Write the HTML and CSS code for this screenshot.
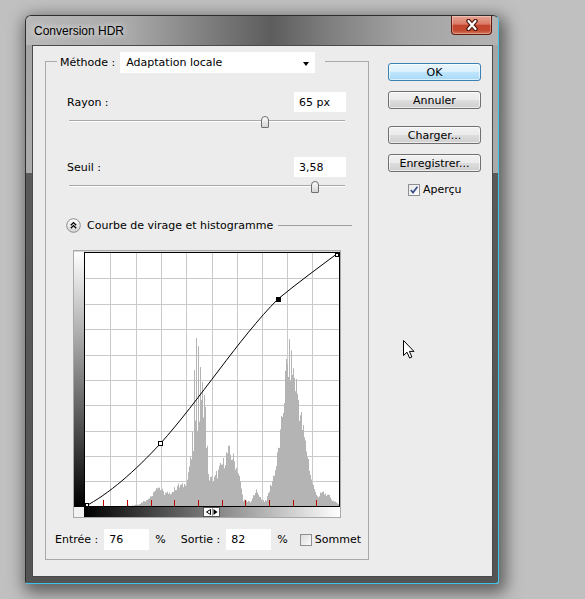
FILE: index.html
```html
<!DOCTYPE html>
<html lang="fr">

<head>
    <meta charset="UTF-8">
    <title>Conversion HDR</title>
    <link rel="stylesheet" href="styles.css">
</head>

<body>
    <div class="desktop">
        <div class="window">
            <div class="titlebar">
                <span class="title">Conversion HDR</span>
                <button class="btn-close">
                    <svg width="14" height="12" viewBox="0 0 14 12">
                        <path d="M3.5,2 L10.5,10 M10.5,2 L3.5,10" stroke="#4a140b" stroke-width="4.4" stroke-linecap="round"/>
                        <path d="M3.5,2 L10.5,10 M10.5,2 L3.5,10" stroke="#fff" stroke-width="2.2" stroke-linecap="round"/>
                    </svg>
                </button>
            </div>

            <div class="client">
                <div class="group">
                    <div class="group-head">
                        <label>Méthode :</label>
                        <div class="select">Adaptation locale</div>
                    </div>

                    <div class="field-row first">
                        <label for="rayon">Rayon :</label>
                        <input type="text" class="field" id="rayon" value="65 px">
                    </div>
                    <div class="slider"><span class="thumb" style="left: 71%"></span></div>

                    <div class="field-row second">
                        <label for="seuil">Seuil :</label>
                        <input type="text" class="field" id="seuil" value="3,58">
                    </div>
                    <div class="slider"><span class="thumb" style="left: 89%"></span></div>

                    <div class="section-head">
                        <svg class="toggle" width="15" height="15" viewBox="0 0 15 15">
                            <defs>
                                <linearGradient id="toggle-bg" x1="0" y1="0" x2="0" y2="1">
                                    <stop offset="0" stop-color="#ffffff"/>
                                    <stop offset="1" stop-color="#d4d4d4"/>
                                </linearGradient>
                            </defs>
                            <circle cx="7.5" cy="7.5" r="6.8" fill="url(#toggle-bg)" stroke="#8c8c8c"/>
                            <path d="M4.8,7.2 L7.5,4.6 L10.2,7.2 M4.8,10.2 L7.5,7.6 L10.2,10.2" fill="none" stroke="#000" stroke-width="1.3"/>
                        </svg>
                        <span class="section-title">Courbe de virage et histogramme</span>
                        <span class="section-line"></span>
                    </div>

                    <svg class="graph" width="268" height="268" viewBox="0 0 268 268">
                        <defs>
                            <linearGradient id="ramp-v" x1="0" y1="0" x2="0" y2="1">
                                <stop offset="0" stop-color="#ffffff"/>
                                <stop offset="1" stop-color="#000000"/>
                            </linearGradient>
                            <linearGradient id="ramp-h" x1="0" y1="0" x2="1" y2="0">
                                <stop offset="0" stop-color="#000000"/>
                                <stop offset="1" stop-color="#ffffff"/>
                            </linearGradient>
                        </defs>
                        <rect x="0.5" y="0.5" width="267" height="267" fill="#d6d6d6" stroke="#a9a9a9"/>
                        <rect x="1" y="2" width="10" height="255" fill="url(#ramp-v)"/>
                        <rect x="11" y="257" width="256" height="10" fill="url(#ramp-h)"/>
                        <rect x="1" y="257" width="10" height="10" fill="#f2f2f2"/>
                        <rect x="11" y="2" width="255" height="255" fill="#fff"/>

                        <!-- grille 10 x 10 -->
                        <path d="M37.5,3V257M63.5,3V257M88.5,3V257M113.5,3V257M139.5,3V257M164.5,3V257M189.5,3V257M214.5,3V257M239.5,3V257
                                 M12,28.5H266M12,54.5H266M12,79.5H266M12,105.5H266M12,130.5H266M12,155.5H266M12,181.5H266M12,206.5H266M12,231.5H266"
                              stroke="#c9c9c9" stroke-width="1"/>

                        <path id="histo" fill="#b4b4b4"/>

                        <path d="M30.5,250V257M54.5,250V257M78.5,250V257M101.5,250V257M125.5,250V257M149.5,250V257M172.5,250V257M196.5,250V257M220.5,250V257M243.5,250V257"
                              stroke="#c00000" stroke-width="1"/>

                        <rect x="11.5" y="2.5" width="255" height="254" fill="none" stroke="#000"/>

                        <path d="M11,257 C36,244 62,221 87,194 C126,151 166,88 205,49 C225,32.5 245,18 265,3" fill="none" stroke="#000" stroke-width="1"/>

                        <rect x="12.5" y="253.5" width="3" height="3" fill="#fff" stroke="#000"/>
                        <rect x="262.5" y="3.5" width="3" height="3" fill="#fff" stroke="#000"/>
                        <rect x="85.5" y="191.5" width="4" height="4" fill="#fff" stroke="#000"/>
                        <rect x="203" y="47" width="5" height="5" fill="#000"/>

                        <rect x="130.5" y="257.5" width="16" height="9" fill="#fff" stroke="#555"/>
                        <path d="M137.5,259.5 L133.5,262 L137.5,264.5 Z" fill="#fff" stroke="#000"/>
                        <path d="M139.5,258 V266" stroke="#999"/>
                        <path d="M140.5,259 L144.5,262 L140.5,265 Z" fill="#000"/>
                    </svg>

                    <div class="values-row">
                        <label for="entree">Entrée :</label>
                        <input type="text" class="field small" id="entree" value="76">
                        <span class="unit">%</span>
                        <label for="sortie" class="sortie">Sortie :</label>
                        <input type="text" class="field small" id="sortie" value="82">
                        <span class="unit">%</span>
                        <span class="check sommet"></span>
                        <span class="check-label">Sommet</span>
                    </div>
                </div>

                <div class="side">
                    <button class="btn btn-default">OK</button>
                    <button class="btn btn-cancel">Annuler</button>
                    <button class="btn btn-load">Charger...</button>
                    <button class="btn btn-save">Enregistrer...</button>
                    <div class="check-row">
                        <span class="check checked">
                            <svg width="10" height="10" viewBox="0 0 10 10">
                                <path d="M1.8,5 L4,7.6 L8.4,1.8" fill="none" stroke="#3a4f8a" stroke-width="1.7"/>
                            </svg>
                        </span>
                        <span class="check-label">Aperçu</span>
                    </div>
                </div>
            </div>
        </div>
    </div>

    <svg class="cursor" width="13" height="20" viewBox="0 0 13 20">
        <path d="M0.5,0.5 L0.5,15.5 L4,12.2 L6.6,18 L8.9,17 L6.4,11.4 L11,11.4 Z" fill="#fff" stroke="#000" stroke-width="1"/>
    </svg>

    <script>
        // histogramme : points clés (x, hauteur) + un peu de bruit
        var keys = [[50, 0], [55, 1], [65, 3], [74, 8], [80, 14], [84, 22], [88, 16], [95, 13], [100, 16], [105, 22],
            [110, 21], [114, 27], [116, 42], [119, 53], [121, 70], [124, 90], [128, 95], [131, 90], [134, 60], [135, 30],
            [140, 26], [145, 36], [150, 44], [155, 56], [159, 50], [164, 38], [167, 24], [170, 7], [173, 5], [178, 6],
            [181, 12], [184, 18], [186, 10], [189, 6], [193, 7], [197, 20], [202, 37], [207, 70], [210, 103], [213, 137],
            [216, 147], [219, 140], [222, 125], [224, 115], [227, 93], [232, 63], [235, 47], [238, 27], [241, 17],
            [245, 10], [250, 15], [256, 10], [262, 5], [266, 2]];
        var spikes = { 119: 75, 121: 137, 123: 169, 125: 161, 127: 140, 129: 125, 131: 112, 132: 100 };

        function heightAt(x) {
            for (var i = 1; i < keys.length; i++) {
                if (x <= keys[i][0]) {
                    var a = keys[i - 1], b = keys[i];
                    return a[1] + (b[1] - a[1]) * (x - a[0]) / (b[0] - a[0]);
                }
            }
            return 0;
        }

        function noise(x) {
            var s = Math.sin(x * 12.9898) * 43758.5453;
            return s - Math.floor(s);
        }

        var d = 'M11,257';
        for (var x = 11; x < 266; x++) {
            var h = x < 50 ? 0 : heightAt(x) * (0.84 + 0.3 * noise(x)) + 2 * noise(x + 7) - 1;
            if (spikes[x]) h = spikes[x];
            var y = (257 - Math.max(h, 0)).toFixed(1);
            d += 'L' + x + ',' + y + 'L' + (x + 1) + ',' + y;
        }
        d += 'L266,257Z';
        document.getElementById('histo').setAttribute('d', d);
    </script>
</body>

</html>
```

FILE: styles.css
```css
body {
    margin: 0;
    height: 599px;
    overflow: hidden;
    position: relative;
    background-color: #c0c0c0;
    font-family: "DejaVu Sans", Tahoma, sans-serif;
    font-size: 11px;
    color: #000;
}

.desktop {
    padding: 15px 0 0 25px;
}

/* Fenêtre */

.window {
    width: 474px;
    height: 569px;
    box-sizing: border-box;
    border: 1px solid #2e2e2e;
    border-right-color: #3cc4ec;
    border-bottom-color: #3cc4ec;
    border-radius: 6px 6px 3px 3px;
    background: linear-gradient(to bottom, #a3a3a3 0, #ababab 157px, #5a5a5a 157px, #545454 100%);
    box-shadow: 3px 5px 16px 4px rgba(0, 0, 0, 0.5);
}

.titlebar {
    display: flex;
    align-items: center;
    height: 29px;
    padding-left: 8px;
    border-radius: 5px 5px 0 0;
    background: linear-gradient(to right, #b9b9b9 0%, #a9a9a9 22%, #7a7a7a 40%, #5d5d5d 52%, #7e7e7e 64%, #a2a2a2 80%, #b3b3b3 100%);
}

.title {
    font-family: "Liberation Sans", Arial, sans-serif;
    font-size: 12px;
    color: #000;
    text-shadow: 0 0 6px rgba(255, 255, 255, 0.8), 0 0 10px rgba(255, 255, 255, 0.5);
}

.btn-close {
    align-self: flex-start;
    display: flex;
    align-items: center;
    justify-content: center;
    width: 41px;
    height: 19px;
    margin-left: auto;
    margin-right: 6px;
    padding: 0;
    border: 1px solid #5e1a0f;
    border-top: none;
    border-radius: 0 0 4px 4px;
    background: linear-gradient(to bottom, #e7a595 0%, #d97965 45%, #c4452d 52%, #c24a30 80%, #d6765a 100%);
    box-shadow: inset 0 0 0 1px rgba(255, 255, 255, 0.3);
}

.client {
    display: flex;
    height: 532px;
    box-sizing: border-box;
    margin: 0 5px 0 6px;
    padding: 15px 0 0 12px;
    border: 1px solid #4a4a4a;
    background-color: #ececec;
}

/* Cadre principal */

.group {
    width: 324px;
    height: 499px;
    box-sizing: border-box;
    padding: 0 22px 0 21px;
    border: 1px solid #a9a9a9;
}

.group-head {
    display: flex;
    align-items: center;
    width: max-content;
    margin: -10px 0 0 -10px;
    padding: 0 10px 0 3px;
    background-color: #ececec;
}

.select {
    position: relative;
    width: 195px;
    height: 21px;
    box-sizing: border-box;
    margin-left: 5px;
    padding-left: 6px;
    line-height: 21px;
    background-color: #fff;
}

.select::after {
    content: "";
    position: absolute;
    right: 6px;
    top: 10px;
    border-left: 3px solid transparent;
    border-right: 3px solid transparent;
    border-top: 4px solid #000;
}

.field-row {
    display: flex;
    justify-content: space-between;
    align-items: center;
}

.field-row.first {
    margin-top: 19px;
}

.field-row.second {
    margin-top: 29px;
}

.field {
    width: 52px;
    height: 20px;
    box-sizing: border-box;
    padding: 0 5px;
    border: none;
    outline: none;
    background-color: #fff;
    font: inherit;
    color: #000;
}

.field.small {
    width: 45px;
    height: 21px;
}

.slider {
    position: relative;
    height: 16px;
    margin: 0 1px 0 2px;
}

.slider::before {
    content: "";
    position: absolute;
    left: 0;
    right: 0;
    top: 8px;
    height: 1px;
    background-color: #a8a8a8;
    border-bottom: 1px solid #fff;
}

.thumb {
    position: absolute;
    top: 4px;
    width: 8px;
    height: 12px;
    box-sizing: border-box;
    margin-left: -4px;
    border: 1px solid #6f6f6f;
    border-radius: 4px 4px 1px 1px;
    background: linear-gradient(to bottom, #fdfdfd, #d4d4d4);
}

.section-head {
    display: flex;
    align-items: center;
    height: 15px;
    margin: 25px -6px 0 -1px;
}

.toggle {
    display: block;
}

.section-title {
    margin-left: 6px;
}

.section-line {
    flex: 1;
    height: 1px;
    margin-left: 5px;
    background-color: #a0a0a0;
}

.graph {
    display: block;
    margin: 17px 0 0 6px;
}

.values-row {
    display: flex;
    align-items: center;
    margin: 11px 0 0 -12px;
    white-space: nowrap;
}

.values-row > * {
    flex-shrink: 0;
}

.values-row .field {
    margin-left: 6px;
}

.unit {
    margin-left: 6px;
}

.sortie {
    margin-left: 15px;
}

.values-row .sommet {
    margin-left: 12px;
}

/* Colonne des boutons */

.side {
    display: flex;
    flex-direction: column;
    width: 93px;
    margin: 2px 0 0 19px;
}

.btn {
    height: 18px;
    padding: 0;
    border: 1px solid #707070;
    border-radius: 3px;
    background: linear-gradient(to bottom, #f2f2f2 0%, #ebebeb 48%, #dddddd 52%, #cfcfcf 100%);
    box-shadow: inset 0 0 0 1px rgba(255, 255, 255, 0.6);
    font: inherit;
    color: #000;
}

.btn-default {
    border-color: #3c7fb1;
    background: linear-gradient(to bottom, #eaf6fd 0%, #d9f0fc 48%, #bee6fd 52%, #a7d9f5 100%);
}

.btn-cancel {
    margin-top: 10px;
}

.btn-load {
    margin-top: 17px;
}

.btn-save {
    margin-top: 10px;
}

.check-row {
    display: flex;
    align-items: center;
    margin-top: 11px;
    padding-left: 20px;
}

.check {
    display: flex;
    align-items: center;
    justify-content: center;
    width: 12px;
    height: 12px;
    box-sizing: border-box;
    border: 1px solid #8e8f8f;
    background: linear-gradient(to bottom right, #dcdcdc, #fbfbfb);
}

.check.checked {
    background: linear-gradient(to bottom right, #e8e8e8, #ffffff);
}

.check-label {
    margin-left: 3px;
}

.cursor {
    position: absolute;
    left: 403px;
    top: 340px;
}
```
